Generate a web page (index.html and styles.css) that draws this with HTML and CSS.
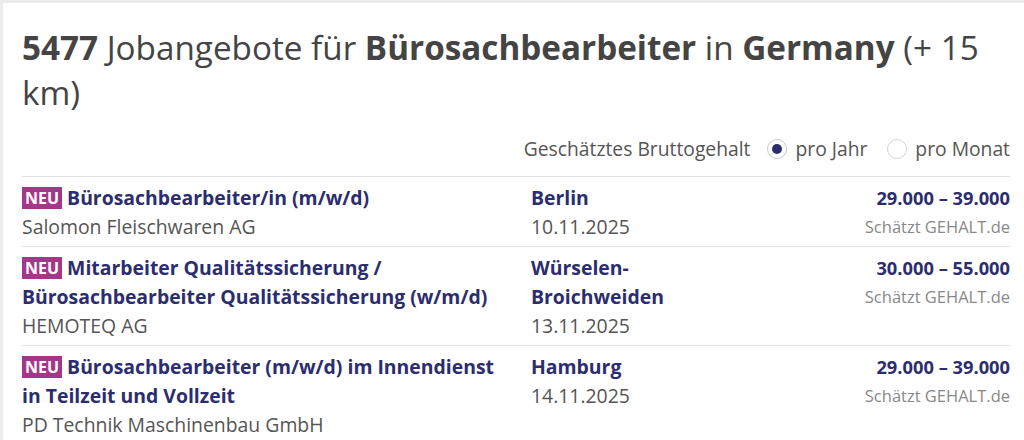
FILE: index.html
```html
<!DOCTYPE html>
<html lang="de">
<head>
<meta charset="utf-8">
<title>Jobangebote</title>
<link rel="stylesheet" href="styles.css">
</head>
<body>
<div class="card">
  <h1 class="headline"><b>5477</b> Jobangebote für <b>Bürosachbearbeiter</b> in <b>Germany</b> (+ 15 km)</h1>
  <div class="salary-switch">
    <span class="switch-label">Geschätztes Bruttogehalt</span>
    <label class="opt"><span class="radio checked"></span>pro Jahr</label>
    <label class="opt"><span class="radio"></span>pro Monat</label>
  </div>
  <ul class="jobs">
    <li class="job">
      <div class="col-title">
        <div class="title"><span class="badge">NEU</span> Bürosachbearbeiter/in (m/w/d)</div>
        <div class="company">Salomon Fleischwaren AG</div>
      </div>
      <div class="col-loc">
        <div class="loc">Berlin</div>
        <div class="date">10.11.2025</div>
      </div>
      <div class="col-sal">
        <div class="sal">29.000 – 39.000</div>
        <div class="src">Schätzt GEHALT.de</div>
      </div>
    </li>
    <li class="job">
      <div class="col-title">
        <div class="title"><span class="badge">NEU</span> Mitarbeiter Qualitätssicherung / Bürosachbearbeiter Qualitätssicherung (w/m/d)</div>
        <div class="company">HEMOTEQ AG</div>
      </div>
      <div class="col-loc">
        <div class="loc">Würselen-Broichweiden</div>
        <div class="date">13.11.2025</div>
      </div>
      <div class="col-sal">
        <div class="sal">30.000 – 55.000</div>
        <div class="src">Schätzt GEHALT.de</div>
      </div>
    </li>
    <li class="job">
      <div class="col-title">
        <div class="title"><span class="badge">NEU</span> Bürosachbearbeiter (m/w/d) im Innendienst in Teilzeit und Vollzeit</div>
        <div class="company">PD Technik Maschinenbau GmbH</div>
      </div>
      <div class="col-loc">
        <div class="loc">Hamburg</div>
        <div class="date">14.11.2025</div>
      </div>
      <div class="col-sal">
        <div class="sal">29.000 – 39.000</div>
        <div class="src">Schätzt GEHALT.de</div>
      </div>
    </li>
  </ul>
</div>
</body>
</html>
```
FILE: styles.css
```css
html, body {
  margin: 0;
  padding: 0;
}
body {
  background: #ececec;
  font-family: "Open Sans", "Noto Sans", sans-serif;
  color: #444;
  padding: 3px 0 0 3px;
}
.card {
  background: #fff;
  padding: 22px 14px 0 19px;
  min-height: 437px;
  box-sizing: border-box;
}
.headline {
  margin: 0;
  font-size: 33.25px;
  line-height: 45px;
  font-weight: 400;
  color: #444;
}
.headline b {
  font-weight: 700;
}
.salary-switch {
  display: flex;
  justify-content: flex-end;
  align-items: center;
  gap: 20px;
  margin-top: 21px;
  padding-bottom: 14px;
  font-size: 19.3px;
  color: #555;
  line-height: 26px;
}
.switch-label {
  margin-right: -3px;
}
.opt {
  display: flex;
  align-items: center;
  gap: 8px;
}
.radio {
  width: 20px;
  height: 20px;
  border: 1px solid #d4d4d4;
  border-radius: 50%;
  box-sizing: border-box;
  background: #fff;
  display: flex;
  align-items: center;
  justify-content: center;
}
.radio.checked {
  border-color: #c8c8c8;
}
.radio.checked::after {
  content: "";
  width: 10px;
  height: 10px;
  border-radius: 50%;
  background: #2b2d6e;
}
.jobs {
  list-style: none;
  margin: 0;
  padding: 0;
}
.job {
  display: grid;
  grid-template-columns: 480px 180px 1fr;
  column-gap: 29px;
  border-top: 1px solid #e2e2e2;
  padding: 6px 0 5px;
  font-size: 19.4px;
  line-height: 29px;
}
.title, .loc, .sal {
  font-weight: 700;
  color: #2b2d6e;
}
.sal {
  font-size: 18.3px;
}
.badge {
  display: inline-block;
  background: #a5378b;
  color: #fff;
  font-size: 16px;
  line-height: 22px;
  padding: 0 3px;
  vertical-align: 1px;
}
.company, .date {
  color: #555;
}
.col-sal {
  text-align: right;
}
.src {
  color: #888;
  font-size: 16.5px;
}
```
